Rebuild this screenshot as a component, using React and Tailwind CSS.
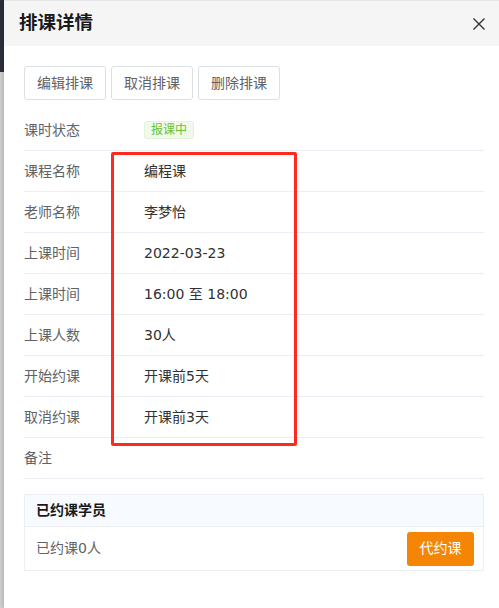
import React from "react";

const rows = [
  ["课程名称", "编程课"],
  ["老师名称", "李梦怡"],
  ["上课时间", "2022-03-23"],
  ["上课时间", "16:00 至 18:00"],
  ["上课人数", "30人"],
  ["开始约课", "开课前5天"],
  ["取消约课", "开课前3天"],
  ["备注", ""],
];

export default function App() {
  return (
    <div
      className="flex w-[499px] h-[608px] overflow-hidden bg-white"
      style={{ fontFamily: '"DejaVu Sans", "Noto Sans CJK SC", sans-serif' }}
    >
      <div className="w-[4px] shrink-0 flex flex-col">
        <div className="h-[72px] bg-[#2d303b]" />
        <div className="flex-1 bg-[#d4d4d4]" />
      </div>
      <div className="relative flex-1 flex flex-col shadow-[-2px_0_4px_rgba(0,0,0,0.15)]">
        <div className="h-[46px] bg-[#f5f5f5] border-t border-[#e6e6e6] flex items-center justify-between pl-[15px] pr-[14px]">
          <div className="text-[18.5px] font-bold text-[#1a1a1a] leading-none">排课详情</div>
          <svg width="12" height="12" viewBox="0 0 12 12">
            <path d="M0.5 0.5 L11.5 11.5 M11.5 0.5 L0.5 11.5" stroke="#333" strokeWidth="1.4" />
          </svg>
        </div>
        <div className="pl-[20px] pr-[15px] pt-[20px]">
          <div className="flex gap-[5px]">
            {["编辑排课", "取消排课", "删除排课"].map((t) => (
              <div
                key={t}
                className="h-[34px] w-[82px] flex items-center justify-center border border-[#dcdfe6] rounded-[3px] text-[14px] text-[#606266]"
              >
                {t}
              </div>
            ))}
          </div>
          <div className="mt-[10px]">
            <div className="h-[41px] flex items-center border-b border-[#ebeef5] text-[14px]">
              <div className="w-[120px] text-[#606266]">课时状态</div>
              <div className="h-[18px] px-[6px] flex items-center bg-[#f0f9eb] border border-[#e1f3d8] rounded-[3px] text-[12px] text-[#67c23a]">
                报课中
              </div>
            </div>
            {rows.map(([l, v], i) => (
              <div key={i} className="h-[41px] flex items-center border-b border-[#ebeef5] text-[14px]">
                <div className="w-[120px] text-[#606266]">{l}</div>
                <div className="text-[#303133]">{v}</div>
              </div>
            ))}
          </div>
          <div className="mt-[15px] border border-[#ebeef5]">
            <div className="h-[32px] bg-[#f7fbff] border-b border-[#ebeef5] flex items-center px-[11px] text-[14px] font-bold text-[#1a1a1a]">
              已约课学员
            </div>
            <div className="h-[43px] flex items-center justify-between pl-[11px] pr-[9px]">
              <div className="text-[14px] text-[#606266]">已约课0人</div>
              <div className="h-[34px] w-[67px] flex items-center justify-center bg-[#f58505] rounded-[3px] text-[14px] text-white">
                代约课
              </div>
            </div>
          </div>
        </div>
        <div className="absolute left-[107px] top-[152px] w-[186px] h-[294px] border-[3px] border-[#ff2a1f] rounded-[2px] pointer-events-none" />
      </div>
    </div>
  );
}
